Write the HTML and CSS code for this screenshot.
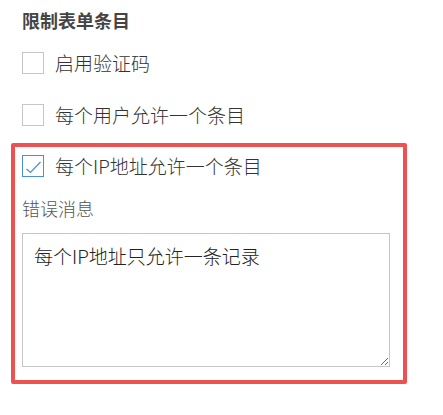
FILE: index.html
```html
<!DOCTYPE html>
<html>
<head>
  <meta charset="utf-8">
  <title>限制表单条目</title>
  <link rel="stylesheet" href="styles.css">
</head>
<body>
  <div class="settings">
    <h3 class="title">限制表单条目</h3>

    <label class="option">
      <span class="box"></span>
      <span class="text">启用验证码</span>
    </label>

    <label class="option">
      <span class="box"></span>
      <span class="text">每个用户允许一个条目</span>
    </label>

    <div class="highlight">
      <label class="option">
        <span class="box checked">
          <svg width="20" height="20" viewBox="0 0 20 20">
            <path d="M3.5 13 L7.5 16.5 L17.5 6" fill="none" stroke="#4a8fd8" stroke-width="1.2"/>
          </svg>
        </span>
        <span class="text">每个IP地址允许一个条目</span>
      </label>

      <div class="field-label">错误消息</div>
      <textarea class="message">每个IP地址只允许一条记录</textarea>
    </div>
  </div>
</body>
</html>
```

FILE: styles.css
```css
* {
  box-sizing: border-box;
}

body {
  margin: 0;
  background: #fff;
  font-family: "Noto Sans CJK SC", "Noto Sans", sans-serif;
  color: #333;
}

.settings {
  padding: 8px 0 0 22px;
}

.title {
  margin: 0 0 19px;
  font-size: 18px;
  line-height: 24px;
  font-weight: bold;
  color: #454545;
}

.option {
  display: flex;
  align-items: center;
  gap: 11px;
  height: 24px;
  margin-bottom: 28px;
  cursor: pointer;
}

.option + .highlight {
  margin-top: -12px;
}

.box {
  width: 22px;
  height: 22px;
  border: 1px solid #c6c6c6;
  background: #fff;
  display: flex;
  align-items: center;
  justify-content: center;
  flex-shrink: 0;
}

.box.checked {
  border-color: #4a8fd8;
}

.text {
  font-size: 19px;
  line-height: 24px;
  font-weight: 300;
  color: #333;
}

.highlight {
  width: 396px;
  margin-left: -11px;
  border: 4px solid #ef5050;
  border-radius: 2px;
  padding: 7px 13px 13px 7px;
}

.highlight .option {
  margin-bottom: 18px;
}

.field-label {
  font-size: 18px;
  line-height: 24px;
  font-weight: 300;
  color: #555;
  margin-bottom: 13px;
}

.message {
  display: block;
  width: 368px;
  height: 134px;
  border: 1px solid #c6c6c6;
  border-radius: 0;
  padding: 10px 11px;
  font-family: "Noto Sans CJK SC", "Noto Sans", sans-serif;
  font-size: 19px;
  line-height: 24px;
  font-weight: 300;
  color: #222;
  outline: none;
}
```
